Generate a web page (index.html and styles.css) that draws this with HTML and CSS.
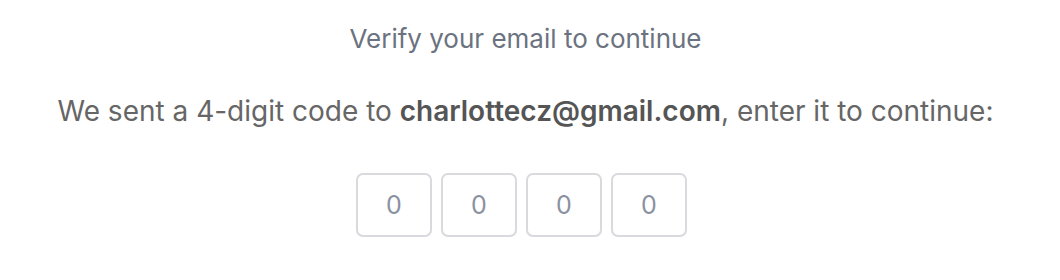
FILE: index.html
```html
<!DOCTYPE html>
<html lang="en">
<head>
<meta charset="utf-8">
<link rel="stylesheet" href="styles.css">
<title>Verify email</title>
</head>
<body>
<main class="verify">
  <h1 class="verify-title">Verify your email to continue</h1>
  <p class="verify-text">We sent a 4-digit code to <strong class="verify-email">charlottecz@gmail.com</strong>, enter it to continue:</p>
  <div class="code-row">
    <input class="code-box" type="text" maxlength="1" placeholder="0">
    <input class="code-box" type="text" maxlength="1" placeholder="0">
    <input class="code-box" type="text" maxlength="1" placeholder="0">
    <input class="code-box" type="text" maxlength="1" placeholder="0">
  </div>
</main>
</body>
</html>
```

FILE: styles.css
```css
html, body {
  margin: 0;
  padding: 0;
  background: #ffffff;
}
body {
  font-family: Inter, "Noto Sans", sans-serif;
}
.verify {
  display: flex;
  flex-direction: column;
  align-items: center;
  padding-top: 23px;
  padding-right: 9px;
}
.verify-title {
  margin: 0;
  font-size: 26px;
  font-weight: 400;
  line-height: 32px;
  color: #6b7280;
}
.verify-text {
  margin: 38px 0 0;
  font-size: 28px;
  font-weight: 400;
  line-height: 36px;
  color: #666666;
  white-space: nowrap;
}
.verify-email {
  font-weight: 600;
  color: #555555;
}
.code-row {
  display: flex;
  gap: 9px;
  margin-top: 44px;
  margin-right: 8px;
}
.code-box {
  box-sizing: border-box;
  width: 76px;
  height: 64px;
  border: 2px solid #d9d9de;
  border-radius: 7px;
  background: #fff;
  text-align: center;
  font-family: Inter, "Noto Sans", sans-serif;
  font-size: 25px;
  color: #8b91a0;
  padding: 0;
  outline: none;
}
.code-box::placeholder {
  color: #8b91a0;
  opacity: 1;
}
```
